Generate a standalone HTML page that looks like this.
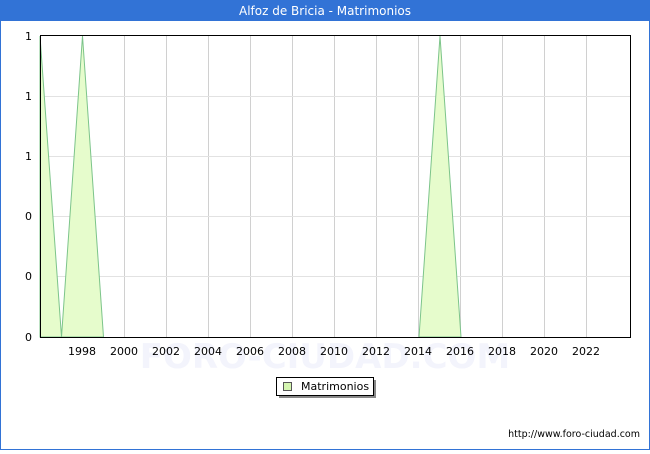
<!DOCTYPE html>
<html><head><style>
body{margin:0;width:650px;height:450px;overflow:hidden;font-family:"DejaVu Sans","Liberation Sans",sans-serif;}
</style></head><body>
<svg width="650" height="450" xmlns="http://www.w3.org/2000/svg" font-family="DejaVu Sans, Liberation Sans, sans-serif">
<rect x="0" y="0" width="650" height="450" fill="#fff"/>
<rect x="0.5" y="0.5" width="649" height="449" fill="none" stroke="#3273d6"/>
<rect x="0" y="0" width="650" height="21" fill="#3273d6"/>
<text x="325" y="15" text-anchor="middle" fill="#fff" font-size="12">Alfoz de Bricia - Matrimonios</text>
<text x="325" y="368" text-anchor="middle" fill="#f3f4fc" font-size="34" font-weight="bold">FORO-CIUDAD.COM</text>
<g stroke="#d0d0d0" stroke-width="1">
<line x1="82.5" y1="36" x2="82.5" y2="337"/><line x1="124.5" y1="36" x2="124.5" y2="337"/>
<line x1="166.5" y1="36" x2="166.5" y2="337"/><line x1="208.5" y1="36" x2="208.5" y2="337"/>
<line x1="250.5" y1="36" x2="250.5" y2="337"/><line x1="292.5" y1="36" x2="292.5" y2="337"/>
<line x1="334.5" y1="36" x2="334.5" y2="337"/><line x1="376.5" y1="36" x2="376.5" y2="337"/>
<line x1="418.5" y1="36" x2="418.5" y2="337"/><line x1="460.5" y1="36" x2="460.5" y2="337"/>
<line x1="502.5" y1="36" x2="502.5" y2="337"/><line x1="544.5" y1="36" x2="544.5" y2="337"/>
<line x1="586.5" y1="36" x2="586.5" y2="337"/>
</g>
<g stroke="#e2e2e2"><line x1="40" y1="96.5" x2="630" y2="96.5"/><line x1="40" y1="156.5" x2="630" y2="156.5"/><line x1="40" y1="216.5" x2="630" y2="216.5"/><line x1="40" y1="276.5" x2="630" y2="276.5"/></g>
<g fill="#e6fccc" stroke="#7cc48a" stroke-width="1">
<polygon points="40,36 61.5,337 40,337"/>
<polygon points="61.5,337 82.5,36 103.5,337"/>
<polygon points="419,337 440,36 461,337"/>
</g>
<rect x="40.5" y="35.5" width="590" height="302" fill="none" stroke="#000"/>
<g font-size="11" fill="#000" text-anchor="end">
<text x="32" y="40">1</text><text x="32" y="100">1</text><text x="32" y="160">1</text>
<text x="32" y="220">0</text><text x="32" y="280">0</text><text x="32" y="341">0</text>
</g>
<g font-size="11" fill="#000" text-anchor="middle">
<text x="82" y="355">1998</text><text x="124" y="355">2000</text><text x="166" y="355">2002</text>
<text x="208" y="355">2004</text><text x="250" y="355">2006</text><text x="292" y="355">2008</text>
<text x="334" y="355">2010</text><text x="376" y="355">2012</text><text x="418" y="355">2014</text>
<text x="460" y="355">2016</text><text x="502" y="355">2018</text><text x="544" y="355">2020</text>
<text x="586" y="355">2022</text>
</g>
<rect x="279" y="380" width="97" height="18" fill="#888"/>
<rect x="276.5" y="377.5" width="97" height="18" fill="#fff" stroke="#000"/>
<rect x="283.5" y="382.5" width="8" height="8" fill="#d4f5b0" stroke="#555"/>
<text x="301" y="390" font-size="11">Matrimonios</text>
<text x="640" y="437" font-size="9.5" text-anchor="end">http://www.foro-ciudad.com</text>
</svg>
</body></html>
